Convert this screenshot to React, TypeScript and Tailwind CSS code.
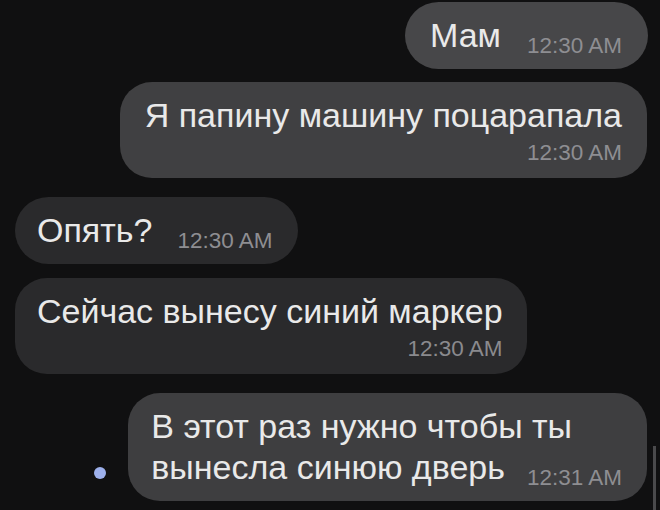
import React from "react";

const font = { fontFamily: '"Liberation Sans", Arial, sans-serif' };

function InlineTime({ t, gap }: { t: string; gap: string }) {
  return (
    <span
      className={
        "inline-block align-[-6px] text-[22.5px] leading-[18px] text-[#8e8e92] whitespace-nowrap " + gap
      }
    >
      {t}
    </span>
  );
}

export default function App() {
  return (
    <div
      className="relative w-[660px] h-[510px] overflow-hidden bg-[#101011] flex flex-col text-[#e9e9e9]"
      style={font}
    >
      {/* 1 */}
      <div className="flex justify-end pr-[12px] mt-[2px]">
        <div className="rounded-[34px] bg-[#474749] pl-[25px] pr-[26px] py-[13px] text-[34px] leading-[41px] whitespace-nowrap">
          Мам
          <InlineTime t="12:30 AM" gap="ml-[26px]" />
        </div>
      </div>

      {/* 2 */}
      <div className="flex justify-end pr-[13px] mt-[13px]">
        <div className="flex flex-col items-end rounded-[32px] bg-[#404042] px-[25px] py-[13px]">
          <span className="text-[34px] leading-[41px] whitespace-nowrap">Я папину машину поцарапала</span>
          <span className="mt-[5px] text-[22.5px] leading-[24px] text-[#8e8e92]">12:30 AM</span>
        </div>
      </div>

      {/* 3 */}
      <div className="flex justify-start pl-[15px] mt-[19px]">
        <div className="rounded-[34px] bg-[#2a2a2c] pl-[22px] pr-[25px] py-[13px] text-[34px] leading-[41px] whitespace-nowrap">
          Опять?
          <InlineTime t="12:30 AM" gap="ml-[25px]" />
        </div>
      </div>

      {/* 4 */}
      <div className="flex justify-start pl-[15px] mt-[14px]">
        <div className="flex flex-col items-end rounded-[32px] bg-[#2a2a2c] pl-[22px] pr-[24px] py-[13px]">
          <span className="text-[34px] leading-[41px] whitespace-nowrap">Сейчас вынесу синий маркер</span>
          <span className="mt-[5px] text-[22.5px] leading-[24px] text-[#8a8a8e]">12:30 AM</span>
        </div>
      </div>

      {/* 5 */}
      <div className="flex justify-end items-end pr-[13px] mt-[19px]">
        <div className="w-[12px] h-[12px] rounded-full bg-[#9db0ec] mr-[22px] mb-[22px]" />
        <div className="rounded-[32px] bg-[#3e3e40] pl-[23px] pr-[25px] py-[13px] text-[34px] leading-[41px] whitespace-nowrap">
          В этот раз нужно чтобы ты
          <br />
          вынесла синюю дверь
          <InlineTime t="12:31 AM" gap="ml-[22px]" />
        </div>
      </div>

      <div className="absolute right-[4px] top-[446px] w-[3px] h-[70px] bg-[#4a4a4c]" />
    </div>
  );
}
